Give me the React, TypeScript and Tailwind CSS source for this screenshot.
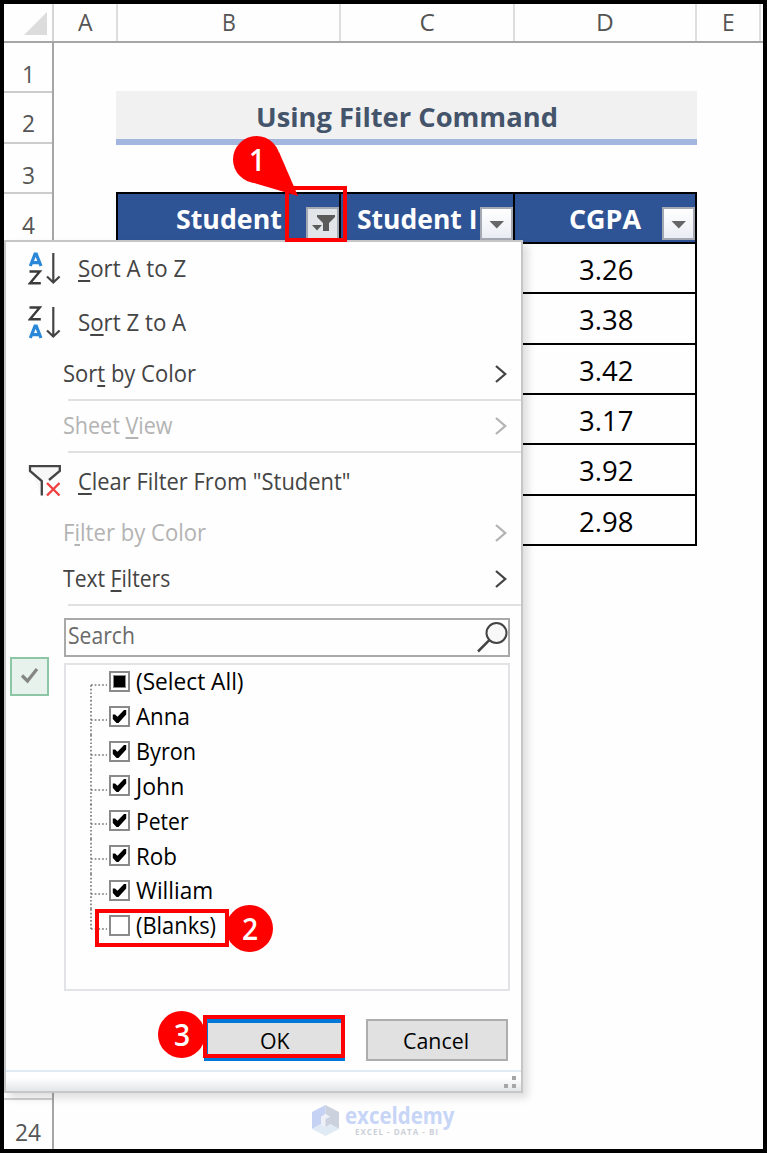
import React, { useLayoutEffect, useRef, useState } from 'react'
import { clsx } from 'clsx'

interface FitTextProps {
  width: number
  className?: string
  children: React.ReactNode
}

// Condenses a label horizontally so that it fills exactly the given width
const FitText: React.FC<FitTextProps> = ({ width, className, children }) => {
  const ref = useRef<HTMLSpanElement>(null)
  const [scale, setScale] = useState(1)

  useLayoutEffect(() => {
    if (ref.current) setScale(width / ref.current.offsetWidth)
  }, [width])

  return (
    <span className={clsx('inline-block shrink-0 whitespace-nowrap', className)} style={{ width }}>
      <span ref={ref} className="inline-block origin-left" style={{ transform: `scaleX(${scale})` }}>
        {children}
      </span>
    </span>
  )
}

const U: React.FC<{ children: React.ReactNode }> = ({ children }) => (
  <span className="underline decoration-[1.5px] underline-offset-[3px]">{children}</span>
)

const DropButton: React.FC<{ filtered?: boolean }> = ({ filtered }) => (
  <span
    className={clsx(
      'mb-[2px] flex h-[33px] w-[33px] shrink-0 items-center justify-center border-2 border-[#a3a8b3]',
      filtered ? 'bg-[#e1e5ea]' : 'bg-linear-to-b from-white to-[#e9edf4]'
    )}
  >
    {filtered ? (
      <svg width="29" height="29" viewBox="0 0 29 29" fill="#5a5a5a">
        <path d="M9 6H27V8L21 14V22H15V14L9 8Z" />
        <path d="M4 16H14L9 21.5Z" />
      </svg>
    ) : (
      <svg width="29" height="29" viewBox="0 0 29 29" fill="#666">
        <path d="M7.5 12H22L14.8 19.5Z" />
      </svg>
    )}
  </span>
)

const Chevron = () => (
  <svg width="14" height="20" viewBox="0 0 14 20" fill="none" stroke="currentColor" strokeWidth="2.3">
    <path d="M2 2L11.2 10L2 18" />
  </svg>
)

const SortIcon: React.FC<{ reverse?: boolean }> = ({ reverse }) => (
  <svg width="33" height="34" viewBox="0 0 33 34" fill="none" strokeWidth="2">
    <g transform={reverse ? 'translate(0 18)' : undefined} stroke="#2b88d8" strokeWidth="3.2">
      <path d="M2.3 14L7 2.2H8.3L13 14M4 10.6H11.5" />
    </g>
    <g transform={reverse ? 'translate(0 -18)' : undefined} stroke="#3b3b3b" strokeWidth="2.4">
      <path d="M1.5 19.5H11.8L2 31.2H12.8" />
    </g>
    <path d="M25.3 1V30M19 24.5L25.3 30.5L31.6 24.5" stroke="#444" strokeWidth="2.2" />
  </svg>
)

const ClearFilterIcon = () => (
  <svg width="33" height="34" viewBox="0 0 33 34" fill="none">
    <path d="M1.5 1H31V6L21 15H13.5V30" fill="#f7f7f7" stroke="none" />
    <path d="M13.8 30.5V16L2 6V1.2H31.8V6L21 15" stroke="#444" strokeWidth="2.3" />
    <path d="M19 18L31.5 30.5M31.5 18L19 30.5" stroke="#f0403f" strokeWidth="2.4" />
  </svg>
)

const SearchIcon = () => (
  <svg width="34" height="33" viewBox="0 0 34 33" fill="none" stroke="#444" strokeWidth="2">
    <circle cx="22.5" cy="12" r="10" fill="#f8f8f8" />
    <path d="M15.3 19.2L4 30.5" strokeWidth="2.5" />
  </svg>
)

interface MenuItemProps {
  className: string
  width: number
  icon?: React.ReactNode
  arrow?: boolean
  disabled?: boolean
  children: React.ReactNode
}

const MenuItem: React.FC<MenuItemProps> = ({ className, width, icon, arrow, disabled, children }) => (
  <div
    className={clsx(
      'flex items-center pr-[13px] text-[23.5px]',
      disabled ? 'text-[#b3b3b3]' : 'text-[#444]',
      icon ? 'pl-[22px]' : 'pl-[56px]',
      className
    )}
  >
    {icon}
    <FitText width={width} className={icon ? 'ml-[17px]' : 'ml-px'}>
      {children}
    </FitText>
    {arrow && (
      <span className="ml-auto">
        <Chevron />
      </span>
    )}
  </div>
)

const Separator = () => <div className="ml-[62px] h-[2px] shrink-0 bg-[#e1e1e1]" />

const students = [
  { name: '(Select All)', state: 'partial', width: 108 },
  { name: 'Anna', state: 'checked', width: 54 },
  { name: 'Byron', state: 'checked', width: 60 },
  { name: 'John', state: 'checked', width: 48 },
  { name: 'Peter', state: 'checked', width: 53 },
  { name: 'Rob', state: 'checked', width: 41 },
  { name: 'William', state: 'checked', width: 77 },
  { name: '(Blanks)', state: 'empty', width: 80 },
]

const CheckBox: React.FC<{ state: string }> = ({ state }) => (
  <svg width="21" height="21" viewBox="0 0 21 21" fill="none">
    <rect x="1" y="1" width="19" height="19" fill="#fff" stroke="#8a8a8a" strokeWidth="2" />
    {state === 'partial' && <rect x="4.5" y="4.5" width="12" height="12" fill="#000" stroke="#888" strokeWidth="1" />}
    {state === 'checked' && <path d="M3.8 8.5H6L8.5 10.8L15 4H17.2V8.5L9.5 17H7.5L3.8 13Z" fill="#000" />}
  </svg>
)

const StudentList = () => (
  <div className="ml-[58px] h-[328px] w-[446px] shrink-0 border-2 border-[#e2e3e6]">
    {students.map((s, i) => (
      <div key={s.name} className="flex h-[34.85px] items-center pl-[23px]">
        <span className="relative h-full w-[20px] shrink-0">
          {/* tree connector */}
          <svg width="19" height="35" viewBox="0 0 19 35" stroke="#777" strokeWidth="1.6" strokeDasharray="1.7 2">
            <path d={i === 0 ? 'M2 20V35' : i === students.length - 1 ? 'M2 0V20' : 'M2 0V35'} />
            <path d="M2 20H18" />
          </svg>
        </span>
        <span className="mb-[2px]">
          <CheckBox state={s.state} />
        </span>
        <FitText width={s.width} className="mb-px ml-[6px] text-[23.5px] text-black">
          {s.name}
        </FitText>
      </div>
    ))}
  </div>
)

const FilterMenu = () => (
  <div className="absolute left-0 top-[236px] flex h-[853px] w-[519px] flex-col border-2 border-[#c6c6c6] bg-[#fefefe] shadow-[5px_5px_8px_rgba(0,0,0,0.13)]">
    <MenuItem className="h-[54px]" width={108} icon={<SortIcon />}>
      <U>S</U>ort A to Z
    </MenuItem>
    <MenuItem className="h-[54px]" width={108} icon={<SortIcon reverse />}>
      S<U>o</U>rt Z to A
    </MenuItem>
    <MenuItem className="h-[49px] pb-px" width={133} arrow>
      Sor<U>t</U> by Color
    </MenuItem>
    <Separator />
    <MenuItem className="h-[50px] pb-px" width={110} arrow disabled>
      Sheet <U>V</U>iew
    </MenuItem>
    <Separator />
    <MenuItem className="h-[57px]" width={272} icon={<ClearFilterIcon />}>
      <U>C</U>lear Filter From "Student"
    </MenuItem>
    <MenuItem className="h-[45px]" width={143} arrow disabled>
      F<U>i</U>lter by Color
    </MenuItem>
    <MenuItem className="h-[49px] pb-px" width={107} arrow>
      Text <U>F</U>ilters
    </MenuItem>
    <Separator />
    <div className="mb-[6px] ml-[58px] mt-[12px] flex h-[39px] w-[446px] shrink-0 items-center justify-between border-2 border-[#a9a9a9] pl-[2px]">
      <FitText width={67} className="mb-[5px] text-[23px] text-[#6a6a6a]">
        Search
      </FitText>
      <SearchIcon />
    </div>
    <StudentList />
    <div className="ml-[198px] mt-[28px] flex shrink-0 gap-[21px] text-[22px] text-black">
      <button className="flex h-[42px] w-[141px] items-center justify-center border-4 border-[#0078d7] bg-[#e1e1e1]">
        <FitText width={30}>OK</FitText>
      </button>
      <button className="flex h-[42px] w-[142px] items-center justify-center border-2 border-[#adadad] bg-[#e1e1e1] pr-[2px]">
        <FitText width={66}>Cancel</FitText>
      </button>
    </div>
    <div className="mt-auto flex h-[21px] shrink-0 items-center justify-end border-t-2 border-[#dfeaf2] bg-linear-to-b from-white from-30% to-[#e3e5e8] pr-[5px]">
      <svg width="12" height="12" viewBox="0 0 12 12" fill="#a6a6a6">
        <path d="M8 0H12V4H8ZM8 8H12V12H8ZM0 8H4V12H0Z" />
      </svg>
    </div>
    {/* accept mark in the icon gutter */}
    <div className="absolute left-[4px] top-[415px] flex h-[39px] w-[39px] items-center justify-center border-2 border-[#8cc6a5] bg-[#e6f2eb]">
      <svg width="20" height="20" viewBox="0 0 20 20" fill="none" stroke="#858585" strokeWidth="3.2">
        <path d="M2 8.5L7.5 14L17 2" />
      </svg>
    </div>
  </div>
)

const Badge: React.FC<{ label: string; className: string }> = ({ label, className }) => (
  <div
    className={clsx(
      'absolute flex h-[47px] w-[47px] items-center justify-center rounded-full bg-[#fe0000] text-[30px] font-semibold text-white',
      className
    )}
  >
    <FitText width={16}>{label}</FitText>
  </div>
)

const Callouts = () => (
  <>
    <svg className="absolute left-[229px] top-[132px]" width="66" height="60" viewBox="0 0 66 60" fill="#fe0000">
      <path d="M46 16L65 60L18 46Z" />
    </svg>
    <Badge label="1" className="left-[229px] top-[132px]" />
    <div className="absolute left-[281px] top-[182px] h-[56px] w-[62px] border-4 border-[#fe0000]" />
    <div className="absolute left-[91px] top-[905px] h-[38px] w-[134px] border-4 border-[#fe0000]" />
    <Badge label="2" className="left-[222px] top-[901px]" />
    <Badge label="3" className="left-[154px] top-[1007px]" />
    <div className="absolute left-[199px] top-[1011px] h-[43px] w-[142px] border-4 border-[#fe0000]" />
  </>
)

const colHead = 'flex items-center justify-center border-r-2 border-[#dedede] pb-px'

const ColumnHeaders = () => (
  <div className="flex h-[39px] border-b-2 border-[#a6a6a6] text-[24.5px] text-[#555]">
    <div className="flex w-[50px] items-start justify-end border-r-2 border-[#d6d6d6] pr-[5px] pt-[8px]">
      <svg width="23" height="23" viewBox="0 0 23 23">
        <path d="M23 0V23H0Z" fill="#dcdcdc" />
      </svg>
    </div>
    <div className={clsx(colHead, 'w-[64px]')}><FitText width={15}>A</FitText></div>
    <div className={clsx(colHead, 'w-[223px]')}><FitText width={14}>B</FitText></div>
    <div className={clsx(colHead, 'w-[174px]')}><FitText width={15}>C</FitText></div>
    <div className={clsx(colHead, 'w-[182px]')}><FitText width={18}>D</FitText></div>
    <div className={clsx(colHead, 'w-[64px]')}><FitText width={13}>E</FitText></div>
  </div>
)

const rowHead = 'flex h-[50.3px] shrink-0 items-end justify-center border-b-2 border-[#cccccc]'

const RowHeaders = () => (
  <div className="flex h-full w-[50px] shrink-0 flex-col border-r-2 border-[#a6a6a6] text-[24.5px] leading-[34px] text-[#555]">
    <div className={rowHead}><FitText width={13}>1</FitText></div>
    <div className={clsx(rowHead, 'pb-[2px]')}><FitText width={13}>2</FitText></div>
    <div className={rowHead}><FitText width={13}>3</FitText></div>
    <div className={rowHead}><FitText width={13}>4</FitText></div>
    <div className="h-[856px] shrink-0 border-b-2 border-[#d0d0d0]" />
    <div className="flex flex-1 items-end justify-center"><FitText width={26}>24</FitText></div>
  </div>
)

const cgpas = ['3.26', '3.38', '3.42', '3.17', '3.92', '2.98']

const headCell = 'flex h-full items-end justify-end border-r-2 border-black text-[26.5px] font-bold text-white'

const Logo = () => (
  <div className="absolute left-[308px] top-[1101px] flex items-center gap-[6px]">
    <svg width="27" height="31" viewBox="0 0 27 31">
      <path d="M13.5 0L0 7V24L9 19V12L13.5 9Z" fill="#c5d2f3" />
      <path d="M13.5 0L27 7V24L18 19V12L13.5 9Z" fill="#ccd2dd" />
      <path d="M0 24L9 19L13.5 22L18 19L27 24L13.5 31Z" fill="#e0eaf4" />
      <path d="M9 12L13.5 9L18 12V19L13.5 22L9 19Z" fill="#edf0f6" />
      <path d="M13.5 14L18 12V19L13.5 22Z" fill="#cbd1df" />
    </svg>
    <div className="flex flex-col">
      <FitText width={109} className="h-[22px] text-[22.5px] font-bold leading-[21px] text-[#c7d5f7]">exceldemy</FitText>
      <FitText width={84} className="ml-[10px] h-[9px] text-[8px] font-bold leading-[9px] tracking-[1px] text-[#cbd0d8]">EXCEL - DATA - BI</FitText>
    </div>
  </div>
)

export default function App() {
  return (
    <div className="h-[1153px] w-[767px] bg-black p-1 font-['Open_Sans','Noto_Sans',sans-serif]">
      <div className="relative flex h-[1145px] w-[759px] flex-col overflow-hidden bg-[#fefefe]">
        <ColumnHeaders />
        <div className="flex min-h-0 flex-1">
          <RowHeaders />
          <div className="ml-[62px] mt-[48px] w-[581px]">
            <div className="flex h-[54px] items-center justify-center border-b-[6px] border-[#a2b6df] bg-[#f1f1f1] pt-[4px] text-[27.5px] font-bold text-[#44546a]">
              <FitText width={302}>Using Filter Command</FitText>
            </div>
            <div className="mt-[47px] flex h-[52px] border-2 border-r-0 border-black bg-[#2f5496]">
              <div className={clsx(headCell, 'w-[223px]')}>
                <FitText width={106} className="mb-[2px] mr-[24px]">Student</FitText>
                <DropButton filtered />
              </div>
              <div className={clsx(headCell, 'w-[174px]')}>
                <FitText width={121} className="mb-[2px] mr-[2px]">Student I</FitText>
                <DropButton />
              </div>
              <div className={clsx(headCell, 'w-[182px]')}>
                <FitText width={72} className="mb-[2px] mr-[21px]">CGPA</FitText>
                <DropButton />
              </div>
            </div>
            <div className="ml-[397px] w-[184px] border-x-2 border-black">
              {cgpas.map((value) => (
                <div key={value} className="flex h-[50.35px] items-center justify-center border-b-2 border-black pl-px pt-[4px] text-[27px] text-black">
                  <FitText width={54}>{value}</FitText>
                </div>
              ))}
            </div>
          </div>
        </div>
        <FilterMenu />
        <Logo />
        <Callouts />
      </div>
    </div>
  )
}
